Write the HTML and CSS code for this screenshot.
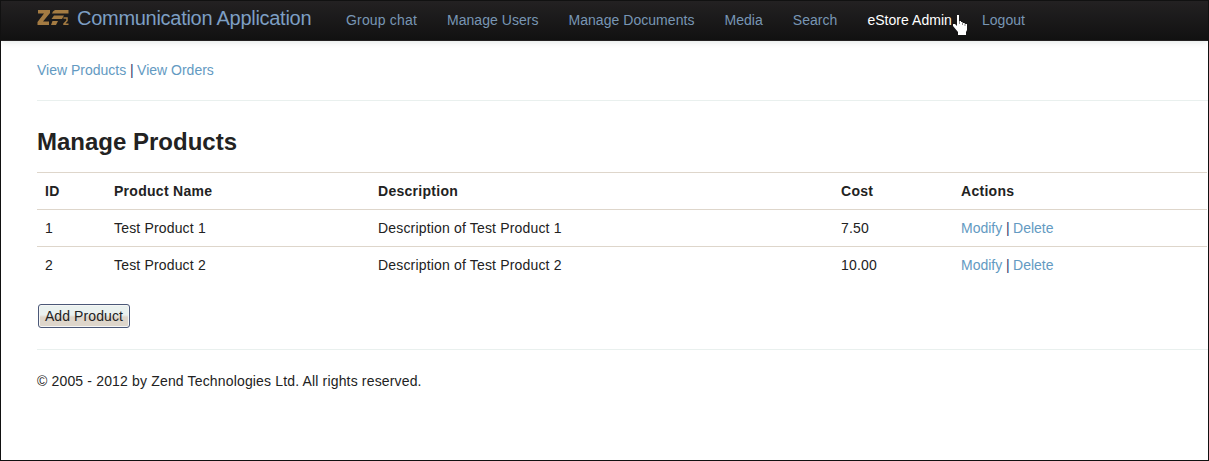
FILE: index.html
```html
<!DOCTYPE html>
<html lang="en">
<head>
<meta charset="utf-8">
<title>Communication Application</title>
<link rel="stylesheet" href="styles.css">
</head>
<body>
<div class="page">
  <header class="navbar">
    <a class="brand" href="#">
      <svg class="logo" width="32" height="16" viewBox="0 0 32 16" aria-hidden="true">
        <path d="M1 0H13V3L6 11.500H12V15H.500V12L7 3.500H1Z"/>
        <path d="M18 0H31.500V3.500H15Q15.500 1 18 0Z"/>
        <path d="M17 5.500H27L25 9H14.500Z"/>
        <path d="M15.500 11H21L19 15H14Z"/>
        <path d="M26.500 8H30V10.700L27 13.900V14.200H31.500" class="logo-digit"/>
      </svg>
      <span>Communication Application</span>
    </a>
    <nav class="nav">
      <a class="first" href="#">Group chat</a>
      <a href="#">Manage Users</a>
      <a href="#">Manage Documents</a>
      <a href="#">Media</a>
      <a href="#">Search</a>
      <a class="active" href="#">eStore Admin</a>
      <a href="#">Logout</a>
    </nav>
    <svg class="pointer" width="16" height="22" viewBox="0 0 16 22" aria-hidden="true">
      <path d="M5 1H7V7H9V8H11V9H13V10H15V16L14 18V21H6V18L1 12V10H3L5 12Z"/>
      <path d="M7.500 7V10M10.500 8V11M13 9V12" class="pointer-gap"/>
    </svg>
  </header>
  <main class="content">
    <p class="links"><a href="#">View Products</a><span class="bar"> | </span><a href="#">View Orders</a></p>
    <hr>
    <h3>Manage Products</h3>
    <table class="table">
      <colgroup><col class="c-id"><col class="c-name"><col class="c-desc"><col class="c-cost"><col></colgroup>
      <thead>
        <tr><th>ID</th><th>Product Name</th><th>Description</th><th>Cost</th><th>Actions</th></tr>
      </thead>
      <tbody>
        <tr><td>1</td><td>Test Product 1</td><td>Description of Test Product 1</td><td>7.50</td><td class="actions"><a href="#">Modify</a><span class="bar"> | </span><a href="#">Delete</a></td></tr>
        <tr><td>2</td><td>Test Product 2</td><td>Description of Test Product 2</td><td>10.00</td><td class="actions"><a href="#">Modify</a><span class="bar"> | </span><a href="#">Delete</a></td></tr>
      </tbody>
    </table>
    <button class="add" type="button">Add Product</button>
    <hr>
    <footer>© 2005 - 2012 by Zend Technologies Ltd. All rights reserved.</footer>
  </main>
</div>
</body>
</html>
```
FILE: styles.css
```css
* { box-sizing: border-box; }
body {
  margin: 0;
  background: #fff;
  color: #222;
  font: 14px/20px "Liberation Sans", Arial, sans-serif;
}
a { color: #639ac2; text-decoration: none; }
.page { height: 461px; border: 1px solid #111; overflow: hidden; }
.navbar {
  position: relative;
  display: flex;
  height: 40px;
  padding-left: 36px;
  background: linear-gradient(#232122, #111);
  border-bottom: 1px solid #232122;
  box-shadow: 0 1px 6px rgba(0, 50, 40, .12);
}
.brand {
  display: flex;
  width: 294px;
  padding-top: 7px;
  font-size: 20px;
  letter-spacing: -.28px;
  color: #7d9fc4;
  white-space: nowrap;
}
.logo { margin: 2px 8px 0 0; fill: #a47b42; }
.logo-digit { fill: none; stroke: #a47b42; stroke-width: 1.5; }
.nav { display: flex; padding-top: 9px; letter-spacing: .04px; }
.nav a { padding: 0 15px; color: #7896b4; white-space: nowrap; }
.nav .first { letter-spacing: .17px; }
.nav .active { color: #fff; }
.pointer { position: absolute; left: 951px; top: 13px; fill: #fff; }
.pointer-gap { stroke: #444; stroke-width: .6; }
.content { padding: 19px 0 0 36px; }
.links { margin: 0; }
.bar { color: #33406f; letter-spacing: -.2px; }
hr { height: 1px; margin: 20px 0; border: 0; background: #e9f0ee; }
h3 { margin: 21px 0 10px; font-size: 24px; line-height: 40px; }
.table { width: 1170px; table-layout: fixed; border-collapse: separate; border-spacing: 0; }
.c-id { width: 69px; }
.c-name { width: 264px; }
.c-desc { width: 463px; }
.c-cost { width: 120px; }
.table th, .table td { padding: 8px; border-top: 1px solid #ded6cb; text-align: left; }
.table th { letter-spacing: .28px; }
.table td { letter-spacing: .17px; }
.table .actions { letter-spacing: 0; }
.add {
  display: block;
  width: 92px;
  height: 24px;
  margin: 21px 0 21px 1px;
  padding: 0;
  font: inherit;
  letter-spacing: .1px;
  color: #222;
  background: linear-gradient(#eaf1ef 45%, #ded6cb 55%);
  border: 1px solid #4b5878;
  border-radius: 3px;
  box-shadow: inset 0 0 0 1px #f7f7f5;
}
footer { padding-top: 1px; letter-spacing: .16px; }
```
